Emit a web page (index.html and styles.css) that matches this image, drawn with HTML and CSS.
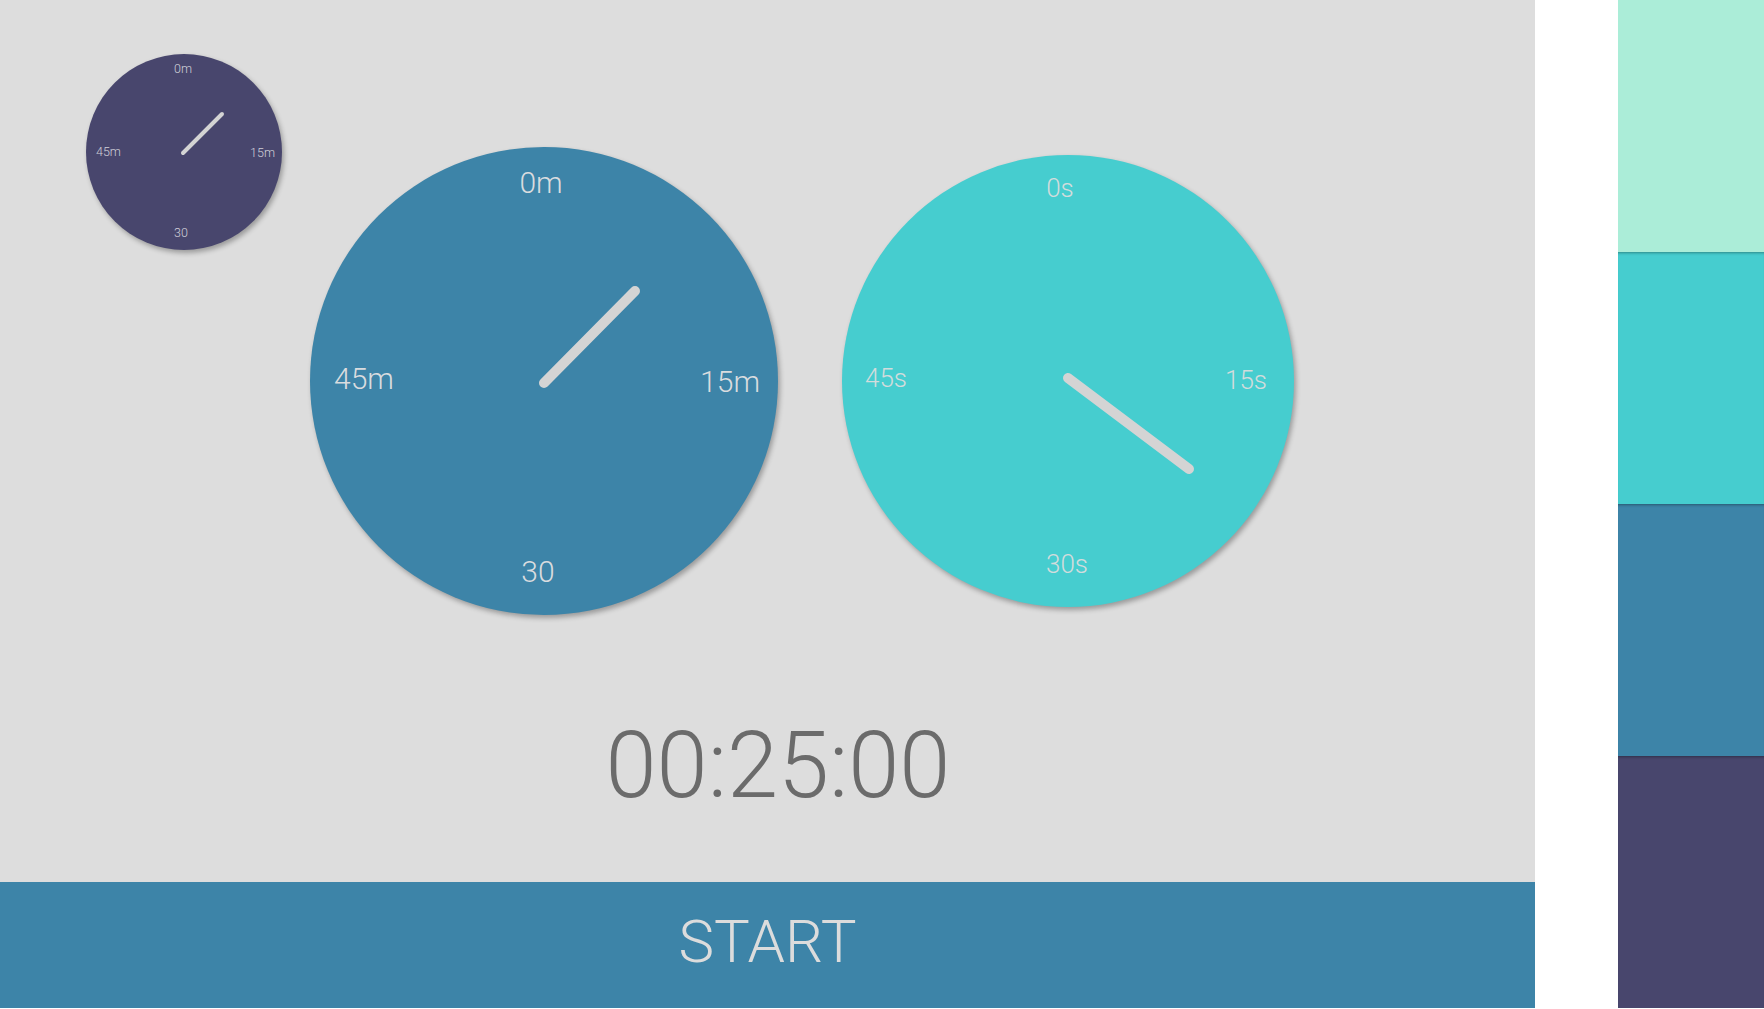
FILE: index.html
```html
<!DOCTYPE html>
<html lang="en">
<head>
<meta charset="utf-8">
<title>Timer</title>
<link rel="stylesheet" href="styles.css">
</head>
<body>
<div class="app">
  <div class="main">
    <div class="stage">
      <div class="clocks">
        <div class="dial dial-small">
          <svg class="face" width="196" height="196" viewBox="0 0 196 196">
            <text class="lbl" x="97" y="19" text-anchor="middle">0m</text>
            <text class="lbl" x="10" y="102" text-anchor="start">45m</text>
            <text class="lbl" x="189" y="103" text-anchor="end">15m</text>
            <text class="lbl" x="95" y="183" text-anchor="middle">30</text>
            <line class="hand" x1="97" y1="99" x2="136" y2="60" stroke-width="4"/>
          </svg>
        </div>
        <div class="dial dial-min">
          <svg class="face" width="468" height="468" viewBox="0 0 468 468">
            <text class="lbl" x="231" y="46" text-anchor="middle">0m</text>
            <text class="lbl" x="24" y="242" text-anchor="start">45m</text>
            <text class="lbl" x="450" y="245" text-anchor="end">15m</text>
            <text class="lbl" x="228" y="435" text-anchor="middle">30</text>
            <line class="hand" x1="234" y1="236" x2="325" y2="144" stroke-width="10"/>
          </svg>
        </div>
        <div class="dial dial-sec">
          <svg class="face" width="452" height="452" viewBox="0 0 452 452">
            <text class="lbl" x="218" y="42" text-anchor="middle">0s</text>
            <text class="lbl" x="23" y="232" text-anchor="start">45s</text>
            <text class="lbl" x="425" y="234" text-anchor="end">15s</text>
            <text class="lbl" x="225" y="418" text-anchor="middle">30s</text>
            <line class="hand" x1="226" y1="223" x2="347" y2="314" stroke-width="10"/>
          </svg>
        </div>
      </div>
      <div class="timer">00:25:00</div>
    </div>
    <div class="start-bar">START</div>
  </div>
  <div class="palette">
    <div class="swatch swatch-mint"></div>
    <div class="swatch swatch-cyan"></div>
    <div class="swatch swatch-blue"></div>
    <div class="swatch swatch-purple"></div>
  </div>
</div>
</body>
</html>
```

FILE: styles.css
```css
html, body {
  margin: 0;
  padding: 0;
  background: #ffffff;
  font-family: Roboto, "Noto Sans", "Liberation Sans", sans-serif;
}

.app {
  display: flex;
  height: 1008px;
  width: 1764px;
}

.main {
  width: 1535px;
  display: flex;
  flex-direction: column;
  background: #dddddd;
}

.stage {
  flex: 1;
}

.clocks {
  display: flex;
  align-items: flex-start;
  padding-left: 86px;
}

.dial {
  border-radius: 50%;
  box-shadow: 2px 3px 5px rgba(0, 0, 0, 0.3);
  flex: none;
}

.face {
  display: block;
  overflow: visible;
}

.lbl {
  font-family: Roboto, "Noto Sans", sans-serif;
  font-weight: 300;
  fill: #d9dcdf;
}

.hand {
  stroke: #d4d4d4;
  stroke-linecap: round;
}

.dial-small {
  width: 196px;
  height: 196px;
  margin-top: 54px;
  background: #48466d;
}

.dial-small .lbl {
  font-size: 12.5px;
  fill: #cfcfd8;
}

.dial-min {
  width: 468px;
  height: 468px;
  margin-top: 147px;
  margin-left: 28px;
  background: #3d84a8;
}

.dial-min .lbl {
  font-size: 30px;
}

.dial-sec {
  width: 452px;
  height: 452px;
  margin-top: 155px;
  margin-left: 64px;
  background: #46cdcf;
}

.dial-sec .lbl {
  font-size: 26px;
  fill: #d2dcdc;
}

.timer {
  margin-top: 105px;
  padding-left: 21px;
  text-align: center;
  font-size: 92px;
  line-height: 92px;
  font-weight: 300;
  color: #6b6b6b;
}

.start-bar {
  height: 126px;
  box-sizing: border-box;
  padding-top: 30px;
  background: #3d84a8;
  color: #dcdcdc;
  text-align: center;
  font-size: 60px;
  line-height: 60px;
  font-weight: 300;
}

.palette {
  margin-left: 83px;
  width: 146px;
  display: flex;
  flex-direction: column;
}

.swatch {
  height: 252px;
}

.swatch + .swatch {
  box-shadow: inset 0 3px 3px -2px rgba(0, 0, 0, 0.35);
}

.swatch-mint { background: #abedd8; }
.swatch-cyan { background: #46cdcf; }
.swatch-blue { background: #3d84a8; }
.swatch-purple { background: #48466d; }
```
